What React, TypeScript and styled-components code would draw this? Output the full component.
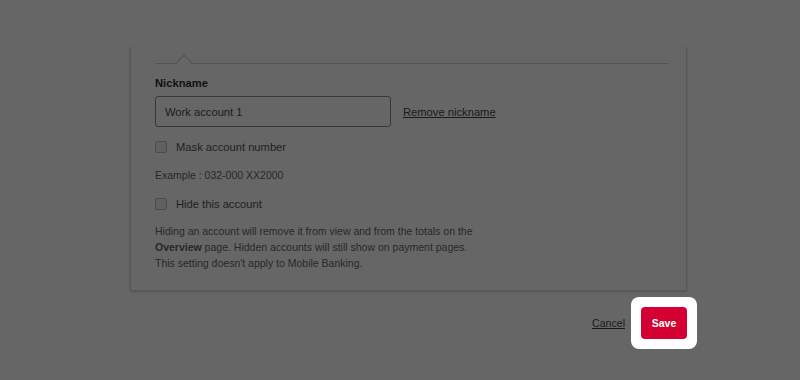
import styled, { createGlobalStyle } from "styled-components";

const GlobalStyle = createGlobalStyle`
  body {
    margin: 0;
    background: #666666;
    font-family: "Liberation Sans", Arial, sans-serif;
  }
`;

const Page = styled.div`
  width: 800px;
  height: 380px;
  overflow: hidden;
  padding: 47px 0 0 130px;
  box-sizing: border-box;
`;

const Card = styled.div`
  width: 557px;
  box-sizing: border-box;
  border: 1px solid #585858;
  border-top: none;
  box-shadow: 0 1px 2px rgba(0, 0, 0, 0.18);
  padding: 16px 17px 19px 24px;
`;

const Divider = styled.div`
  position: relative;
  border-top: 1px solid #545454;

  &::before {
    content: "";
    position: absolute;
    left: 23px;
    top: -7px;
    width: 11px;
    height: 11px;
    background: #666666;
    border-top: 1px solid #545454;
    border-left: 1px solid #545454;
    transform: rotate(45deg);
  }
`;

const Label = styled.div`
  margin-top: 11px;
  font-size: 11.2px;
  line-height: 16px;
  font-weight: 700;
  color: #111111;
`;

const NicknameRow = styled.div`
  display: flex;
  align-items: center;
  margin-top: 5px;
`;

const TextInput = styled.div`
  width: 236px;
  height: 31px;
  box-sizing: border-box;
  border: 1px solid #383838;
  border-radius: 3px;
  padding-left: 9px;
  display: flex;
  align-items: center;
  font-size: 11.2px;
  color: #1c1c1c;
`;

const TextLink = styled.a<{ $size?: number }>`
  font-size: ${(p) => p.$size ?? 11.2}px;
  color: #1a1a1a;
  text-decoration: underline;
  cursor: pointer;
`;

const RemoveLink = styled(TextLink)`
  margin-left: 12px;
`;

const CheckRow = styled.label<{ $top: number }>`
  display: flex;
  align-items: center;
  gap: 9px;
  margin-top: ${(p) => p.$top}px;
  height: 16px;
  font-size: 11.2px;
  color: #1f1f1f;
`;

const CheckBox = styled.span`
  width: 10px;
  height: 10px;
  border: 1px solid #4c4c4c;
  border-radius: 2px;
  background: #606060;
`;

const Hint = styled.div<{ $top: number }>`
  margin-top: ${(p) => p.$top}px;
  font-size: 10.5px;
  line-height: 16px;
  color: #282828;
`;

const Actions = styled.div`
  width: 557px;
  display: flex;
  justify-content: flex-end;
  align-items: center;
  margin-top: 6px;
`;

const Spotlight = styled.div`
  margin-left: 6px;
  margin-right: -10px;
  padding: 10px;
  background: #ffffff;
  border-radius: 8px;
`;

const SaveButton = styled.button`
  width: 46px;
  height: 32px;
  border: none;
  border-radius: 4px;
  background: #d50032;
  color: #ffffff;
  font-family: "Liberation Sans", Arial, sans-serif;
  font-weight: 700;
  font-size: 10.5px;
  padding: 0;
  display: block;
`;

const App = (): JSX.Element => {
  return (
    <>
      <GlobalStyle />
      <Page>
        <Card>
          <Divider />
          <Label>Nickname</Label>
          <NicknameRow>
            <TextInput>Work account 1</TextInput>
            <RemoveLink>Remove nickname</RemoveLink>
          </NicknameRow>
          <CheckRow $top={12}>
            <CheckBox />
            Mask account number
          </CheckRow>
          <Hint $top={12}>Example : 032-000 XX2000</Hint>
          <CheckRow $top={13}>
            <CheckBox />
            Hide this account
          </CheckRow>
          <Hint $top={11}>
            Hiding an account will remove it from view and from the totals on the
            <br />
            <b>Overview</b> page. Hidden accounts will still show on payment pages.
            <br />
            This setting doesn't apply to Mobile Banking.
          </Hint>
        </Card>
        <Actions>
          <TextLink $size={10.6}>Cancel</TextLink>
          <Spotlight>
            <SaveButton>Save</SaveButton>
          </Spotlight>
        </Actions>
      </Page>
    </>
  );
};

export default App;
